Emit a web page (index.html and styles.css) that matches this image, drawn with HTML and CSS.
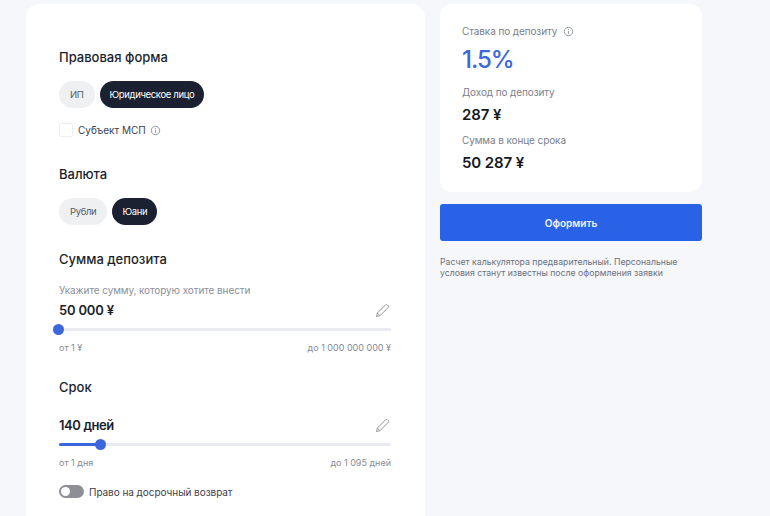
FILE: index.html
```html
<!DOCTYPE html>
<html lang="ru">
<head>
    <meta charset="UTF-8">
    <meta name="viewport" content="width=device-width, initial-scale=1.0">
    <title>Депозит</title>
    <link rel="stylesheet" href="styles.css">
</head>
<body>

<div class="calc">
    <div class="form-card">
        <h2 class="form-title">Правовая форма</h2>
        <div class="chips">
            <span class="chip">ИП</span>
            <span class="chip chip--active">Юридическое лицо</span>
        </div>
        <div class="check-row">
            <span class="checkbox"></span>
            <span>Субъект МСП</span>
            <svg class="info" viewBox="0 0 12 12"><circle cx="6" cy="6" r="4.6"/><path d="M6 5.3v3.2M6 3.4v.9"/></svg>
        </div>

        <h2 class="form-title form-title--currency">Валюта</h2>
        <div class="chips">
            <span class="chip">Рубли</span>
            <span class="chip chip--active">Юани</span>
        </div>

        <h2 class="form-title form-title--sum">Сумма депозита</h2>
        <div class="hint">Укажите сумму, которую хотите внести</div>
        <div class="value-row">
            <span>50 000 ¥</span>
            <svg class="pencil" viewBox="0 0 16 16"><path d="M1.6 14.4l.9-3.7L11.3 1.9a1.3 1.3 0 0 1 1.8 0l1 1a1.3 1.3 0 0 1 0 1.8L5.3 13.5z"/><path d="M2.5 10.7l2.8 2.8"/></svg>
        </div>
        <div class="slider">
            <div class="slider-fill slider-fill--min"></div>
            <div class="slider-thumb slider-thumb--min"></div>
        </div>
        <div class="limits">
            <span>от 1 ¥</span>
            <span>до 1 000 000 000 ¥</span>
        </div>

        <h2 class="form-title form-title--term">Срок</h2>
        <div class="value-row value-row--term">
            <span>140 дней</span>
            <svg class="pencil" viewBox="0 0 16 16"><path d="M1.6 14.4l.9-3.7L11.3 1.9a1.3 1.3 0 0 1 1.8 0l1 1a1.3 1.3 0 0 1 0 1.8L5.3 13.5z"/><path d="M2.5 10.7l2.8 2.8"/></svg>
        </div>
        <div class="slider">
            <div class="slider-fill slider-fill--term"></div>
            <div class="slider-thumb slider-thumb--term"></div>
        </div>
        <div class="limits">
            <span>от 1 дня</span>
            <span>до 1 095 дней</span>
        </div>

        <div class="toggle-row">
            <span class="toggle"><span class="toggle-knob"></span></span>
            <span>Право на досрочный возврат</span>
        </div>
    </div>

    <div class="side">
        <div class="result-card">
            <div class="result-label">
                Ставка по депозиту
                <svg class="info" viewBox="0 0 12 12"><circle cx="6" cy="6" r="4.6"/><path d="M6 5.3v3.2M6 3.4v.9"/></svg>
            </div>
            <div class="rate">1.5%</div>
            <div class="result-label">Доход по депозиту</div>
            <div class="result-value">287 ¥</div>
            <div class="result-label">Сумма в конце срока</div>
            <div class="result-value">50 287 ¥</div>
        </div>
        <button class="submit">Оформить</button>
        <p class="note">Расчет калькулятора предварительный. Персональные условия станут известны после оформления заявки</p>
    </div>
</div>

</body>
</html>
```

FILE: styles.css
```css
html, body {
    height: 100%;
}
body {
    margin: 0;
    background-color: #f5f7fb;
    font-family: "Inter", "Liberation Sans", sans-serif;
    color: #1b1f2b;
    overflow: hidden;
}
.calc {
    display: flex;
    align-items: flex-start;
    gap: 15px;
    padding: 4px 0 0 26px;
}
.form-card {
    width: 399px;
    height: 512px;
    box-sizing: border-box;
    padding: 45px 34px 0 33px;
    background-color: #fff;
    border-radius: 14px 14px 0 0;
}
.form-title {
    margin: 0;
    font-size: 13px;
    line-height: 16px;
    font-weight: 500;
}
.form-title--currency {
    margin-top: 29px;
}
.form-title--sum {
    margin-top: 26px;
}
.form-title--term {
    margin-top: 26px;
}
.chips {
    display: flex;
    gap: 5px;
    margin-top: 16px;
}
.chip {
    display: flex;
    align-items: center;
    height: 27px;
    padding: 0 11px;
    background-color: #eef0f2;
    border-radius: 14px;
    font-size: 9.5px;
    letter-spacing: -0.35px;
    color: #555b66;
}
.chip--active {
    padding: 0 10px;
    background-color: #1b2130;
    color: #fff;
}
.check-row {
    display: flex;
    align-items: center;
    gap: 4px;
    margin-top: 15px;
    font-size: 10px;
    color: #3c414c;
}
.checkbox {
    width: 12px;
    height: 12px;
    margin-right: 1px;
    border: 1px solid #eceef1;
    border-radius: 2px;
}
.info {
    width: 11px;
    height: 11px;
    fill: none;
    stroke: #8b9099;
    stroke-width: 1;
}
.hint {
    margin-top: 17px;
    font-size: 10px;
    line-height: 12px;
    letter-spacing: -0.1px;
    color: #8a8f98;
}
.value-row {
    display: flex;
    justify-content: space-between;
    align-items: center;
    margin-top: 6px;
    font-size: 13px;
    line-height: 16px;
    font-weight: 600;
    letter-spacing: -0.2px;
}
.value-row--term {
    margin-top: 22px;
    letter-spacing: -0.4px;
}
.pencil {
    width: 15px;
    height: 15px;
    margin-right: 1px;
    fill: none;
    stroke: #8d9096;
    stroke-width: 1;
}
.slider {
    position: relative;
    height: 3px;
    margin-top: 10px;
    background-color: #e9ebf1;
    border-radius: 2px;
}
.slider-fill {
    position: absolute;
    left: 0;
    top: 0;
    height: 3px;
    background-color: #3c66dc;
    border-radius: 2px;
}
.slider-fill--min {
    width: 0;
}
.slider-fill--term {
    width: 41px;
}
.slider-thumb {
    position: absolute;
    top: -4px;
    width: 11px;
    height: 11px;
    background-color: #3c66dc;
    border-radius: 50%;
}
.slider-thumb--min {
    left: -6px;
}
.slider-thumb--term {
    left: 36px;
}
.limits {
    display: flex;
    justify-content: space-between;
    margin-top: 11px;
    font-size: 9px;
    line-height: 11px;
    color: #858a93;
}
.toggle-row {
    display: flex;
    align-items: center;
    gap: 5px;
    margin-top: 17px;
    font-size: 10px;
    letter-spacing: -0.05px;
    color: #3c414c;
}
.toggle {
    display: block;
    position: relative;
    width: 25px;
    height: 13px;
    background-color: #8d8f94;
    border-radius: 7px;
}
.toggle-knob {
    position: absolute;
    left: 2px;
    top: 2px;
    width: 9px;
    height: 9px;
    background-color: #fff;
    border-radius: 50%;
}
.side {
    width: 262px;
}
.result-card {
    height: 188px;
    box-sizing: border-box;
    padding: 21px 21px 0 22px;
    background-color: #fff;
    border-radius: 12px;
}
.result-label {
    display: flex;
    align-items: center;
    gap: 6px;
    font-size: 10px;
    line-height: 13px;
    letter-spacing: -0.1px;
    color: #7b808a;
}
.rate {
    margin: 7px 0 12px;
    font-size: 24px;
    line-height: 29px;
    font-weight: 500;
    letter-spacing: -1px;
    color: #3c66dc;
}
.result-value {
    margin: 7px 0 10px;
    font-size: 15px;
    line-height: 18px;
    font-weight: 600;
    letter-spacing: -0.1px;
    color: #15181f;
}
.submit {
    display: block;
    width: 100%;
    height: 37px;
    margin-top: 12px;
    background-color: #2962e6;
    border: none;
    border-radius: 3px;
    font-family: inherit;
    font-size: 10px;
    font-weight: 600;
    color: #f2f5fd;
}
.note {
    margin: 16px 0 0;
    font-size: 8.7px;
    line-height: 11px;
    color: #6c717b;
}
```
